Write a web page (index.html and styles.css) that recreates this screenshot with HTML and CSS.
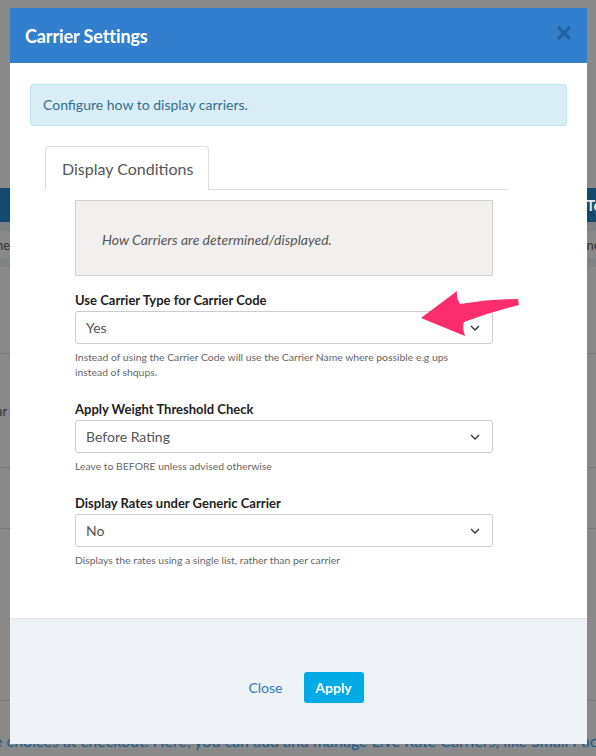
FILE: index.html
```html
<!DOCTYPE html>
<html>
<head>
<meta charset="utf-8">
<link rel="stylesheet" href="styles.css">
</head>
<body>
<div class="page">
  <div class="bg-top"></div>
  <div class="bg-bar"><span class="bar-text">To</span></div>
  <div class="bg-strip"></div>
  <div class="bg-row r1"><span class="l">ne</span><span class="r">nc</span></div>
  <div class="bg-strip"></div>
  <div class="bg-row r2"></div>
  <div class="bg-row r3"><span class="l">ar</span></div>
  <div class="bg-row r4"></div>
  <div class="bg-row r5"></div>
  <div class="bg-row r6"></div>
  <div class="bg-text">e choices at checkout. Here, you can add and manage Live Rate Carriers, like Small Pack</div>
</div>

<div class="modal">
  <div class="modal-header">
    <h2 class="modal-title">Carrier Settings</h2>
    <span class="close-x"><svg width="16" height="16" viewBox="0 0 16 16"><path d="M2 2 L14 14 M14 2 L2 14" stroke="#2563a8" stroke-width="3.2" stroke-linecap="butt"/></svg></span>
  </div>
  <div class="modal-body">
    <div class="alert">Configure how to display carriers.</div>
    <div class="tabs-wrap">
      <div class="tabs"><div class="tab active">Display Conditions</div></div>
      <div class="tab-content">
        <div class="well"><em>How Carriers are determined/displayed.</em></div>
        <div class="field">
          <div class="label">Use Carrier Type for Carrier Code</div>
          <div class="select"><span>Yes</span><svg class="chev" width="10" height="6" viewBox="0 0 10 6"><path d="M1 1 L5 5 L9 1" fill="none" stroke="#333" stroke-width="1.3"/></svg></div>
          <div class="help">Instead of using the Carrier Code will use the Carrier Name where possible e.g ups<br>instead of shqups.</div>
        </div>
        <div class="field">
          <div class="label">Apply Weight Threshold Check</div>
          <div class="select"><span>Before Rating</span><svg class="chev" width="10" height="6" viewBox="0 0 10 6"><path d="M1 1 L5 5 L9 1" fill="none" stroke="#333" stroke-width="1.3"/></svg></div>
          <div class="help">Leave to BEFORE unless advised otherwise</div>
        </div>
        <div class="field">
          <div class="label">Display Rates under Generic Carrier</div>
          <div class="select"><span>No</span><svg class="chev" width="10" height="6" viewBox="0 0 10 6"><path d="M1 1 L5 5 L9 1" fill="none" stroke="#333" stroke-width="1.3"/></svg></div>
          <div class="help">Displays the rates using a single list, rather than per carrier</div>
        </div>
      </div>
    </div>
  </div>
  <div class="modal-footer">
    <a class="btn-link">Close</a>
    <button class="btn-apply">Apply</button>
  </div>
</div>

<svg class="arrow" width="110" height="50" viewBox="0 0 110 50">
  <path d="M2 28 L38 1 Q37 8 41 14 Q70 9 99 9 L100 15 Q72 22 45 32 Q43 38 46 46 Z" fill="#fb2d6e"/>
</svg>
</body>
</html>
```
FILE: styles.css
```css
html, body {
  margin: 0;
  padding: 0;
}
body {
  background: #898989;
  font-family: Lato, "Open Sans", sans-serif;
  width: 596px;
  height: 756px;
  overflow: hidden;
  position: relative;
}
.page {
  display: flex;
  flex-direction: column;
}
.bg-top {
  height: 188px;
}
.bg-bar {
  height: 34px;
  background: #144a6f;
  display: flex;
  justify-content: flex-end;
  align-items: center;
}
.bar-text {
  color: #dfe6ec;
  font-weight: 700;
  font-size: 15px;
  margin-right: -6px;
}
.bg-strip {
  height: 9px;
  background: #7f8182;
}
.bg-row {
  border-bottom: 1px solid #777;
  display: flex;
  justify-content: space-between;
  align-items: center;
  font-size: 13px;
  color: #333;
}
.bg-row .l { margin-left: -4px; }
.bg-row .r { margin-right: -4px; }
.r1 { height: 27px; border-bottom: none; }
.r2 { height: 86px; }
.r3 { height: 113px; }
.r4 { height: 60px; }
.r5 { height: 171px; }
.r6 { height: 28px; border-bottom: none; }
.bg-text {
  color: #1b5a88;
  font-size: 16px;
  white-space: nowrap;
  margin-left: -6px;
  margin-top: 2px;
}

.modal {
  position: absolute;
  left: 10px;
  top: 8px;
  width: 577px;
  height: 736px;
  background: #fff;
  display: flex;
  flex-direction: column;
}
.modal-header {
  height: 55px;
  background: #317fcd;
  display: flex;
  align-items: center;
  justify-content: space-between;
  padding: 0 15px 0 15px;
  box-sizing: border-box;
}
.modal-title {
  margin: 0;
  color: #fff;
  font-size: 18px;
  font-weight: 700;
  letter-spacing: -0.1px;
}
.close-x {
  display: flex;
  margin-top: -5px;
}
.modal-body {
  flex: 1;
  padding: 21px 20px 0 20px;
}
.alert {
  background: #d9edf7;
  border: 1px solid #bce8f1;
  border-radius: 3px;
  color: #31708f;
  font-size: 14px;
  line-height: 20px;
  padding: 10px 12px;
}
.tabs-wrap {
  margin: 20px 59px 0 15px;
}
.tabs {
  display: flex;
  border-bottom: 1px solid #ddd;
}
.tab {
  height: 44px;
  width: 164px;
  box-sizing: border-box;
  border: 1px solid #ddd;
  border-bottom: none;
  border-radius: 4px 4px 0 0;
  background: #fff;
  margin-bottom: -1px;
  padding-left: 16px;
  display: flex;
  align-items: center;
  font-size: 16px;
  color: #555;
}
.tab-content {
  padding: 10px 15px 0 30px;
}
.well {
  height: 76px;
  box-sizing: border-box;
  background: #f1f0ef;
  border: 1px solid #d0d0d0;
  display: flex;
  align-items: center;
  padding-left: 26px;
  font-size: 14px;
  color: #555;
  padding-top: 3px;
}
.field {
  margin-top: 16px;
}
.field + .field {
  margin-top: 21px;
}
.label {
  font-size: 13px;
  font-weight: 700;
  color: #222;
  line-height: 16px;
  margin-bottom: 3px;
}
.select {
  height: 33px;
  box-sizing: border-box;
  border: 1px solid #ccc;
  border-radius: 3px;
  display: flex;
  align-items: center;
  justify-content: space-between;
  padding: 0 12px 0 10px;
  font-size: 14px;
  color: #555;
}
.chev {
  display: block;
}
.help {
  font-size: 10.4px;
  color: #666;
  line-height: 15px;
  margin-top: 6px;
}
.modal-footer {
  height: 126px;
  box-sizing: border-box;
  background: #eef1f6;
  border-top: 1px solid #dfe3ea;
  display: flex;
  justify-content: center;
  align-items: flex-start;
  padding-top: 53px;
  gap: 9px;
  padding-left: 3px;
}
.btn-link {
  color: #337ab7;
  font-size: 14px;
  padding: 0 12px;
  line-height: 31px;
}
.btn-apply {
  background: #00aae6;
  color: #fff;
  border: none;
  border-radius: 3px;
  height: 31px;
  width: 60px;
  font-family: Lato, sans-serif;
  font-weight: 700;
  font-size: 14px;
  padding: 0;
}
.arrow {
  position: absolute;
  left: 419px;
  top: 290px;
}
```
